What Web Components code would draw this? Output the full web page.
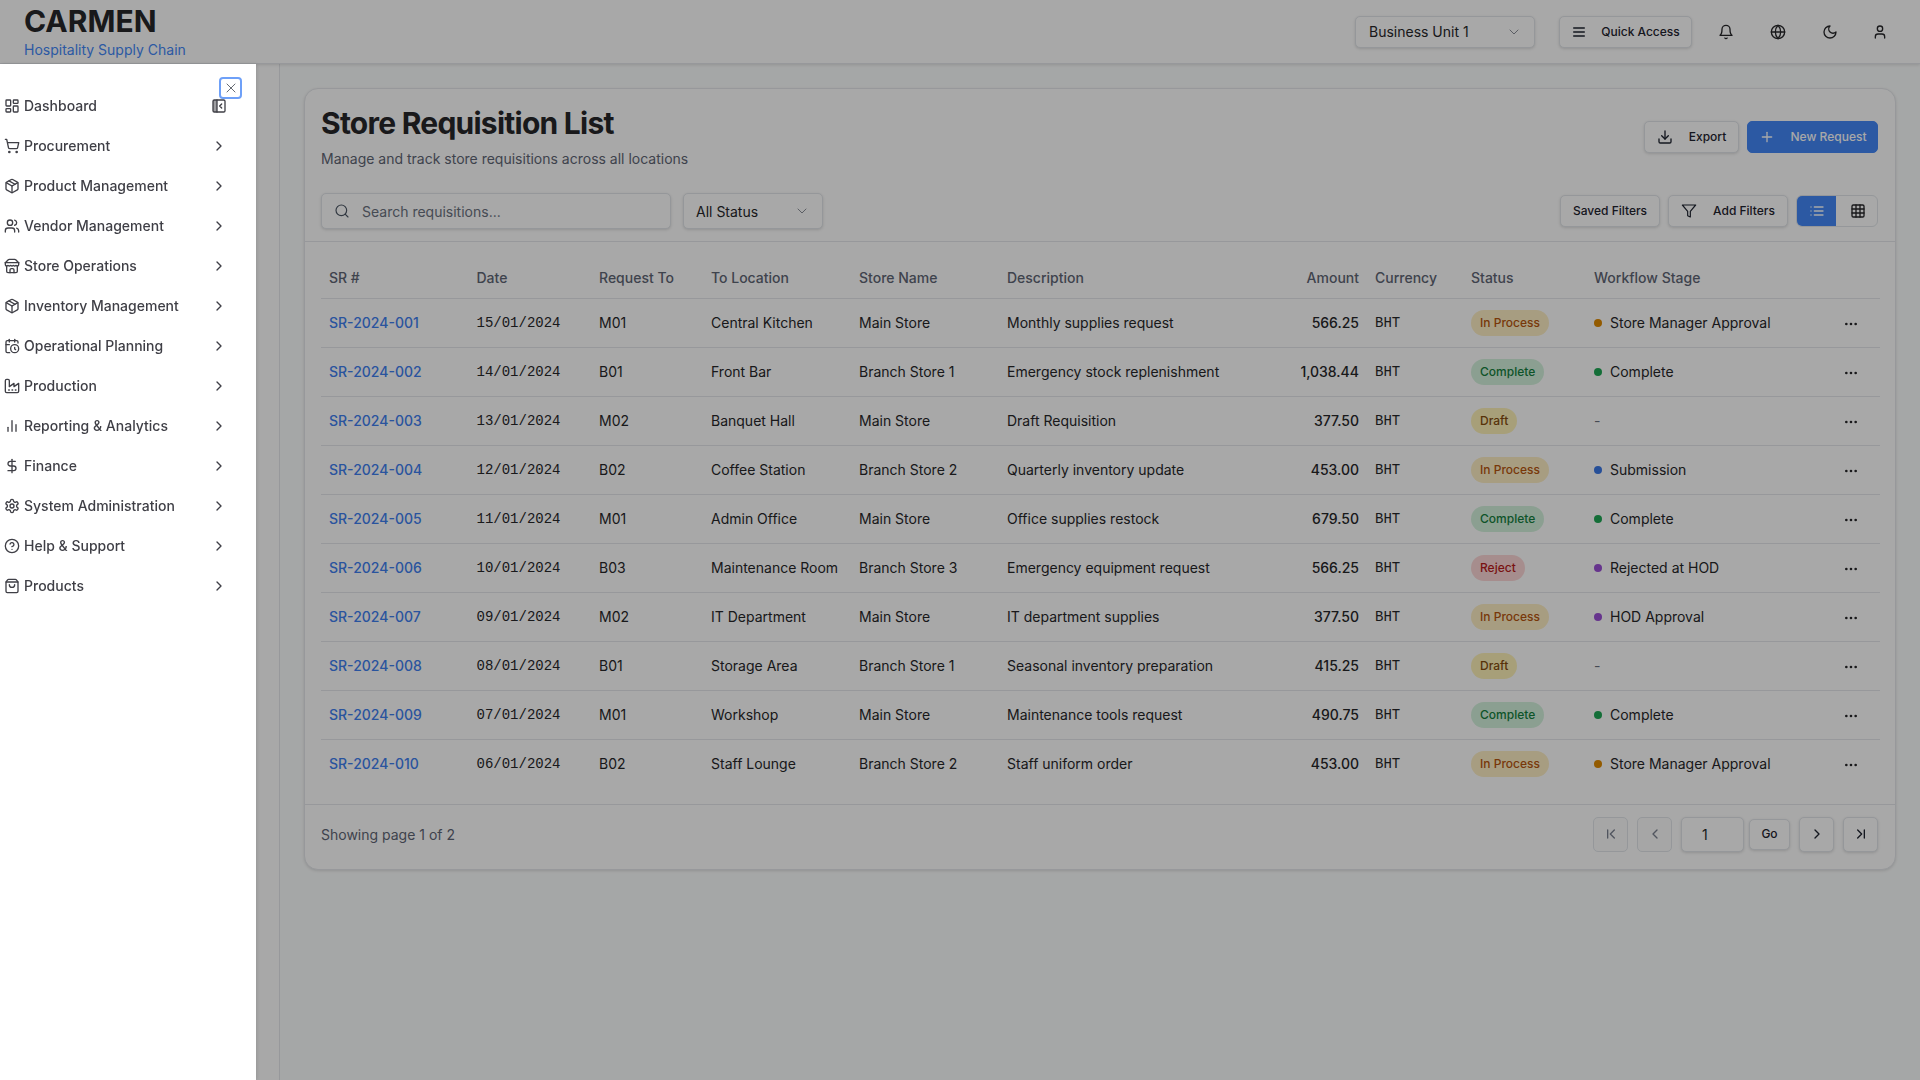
<!DOCTYPE html>
<html><head><meta charset="utf-8"><title>Store Requisition List</title>
<style>
html,body{margin:0;padding:0;height:100%}
body{font-family:Inter,"Noto Sans",sans-serif;font-size:14px;color:#0f172a;background:#fcfdfd;overflow:hidden}
</style></head><body>
<app-root></app-root>
<script>
const P={
dash:'<rect x="3" y="3" width="7" height="9" rx="1"/><rect x="14" y="3" width="7" height="5" rx="1"/><rect x="14" y="12" width="7" height="9" rx="1"/><rect x="3" y="16" width="7" height="5" rx="1"/>',
cart:'<circle cx="8" cy="21" r="1"/><circle cx="19" cy="21" r="1"/><path d="M2.05 2.05h2l2.66 12.42a2 2 0 0 0 2 1.58h9.78a2 2 0 0 0 1.95-1.57l1.65-7.43H5.12"/>',
pkg:'<path d="m7.5 4.27 9 5.15"/><path d="M21 8a2 2 0 0 0-1-1.73l-7-4a2 2 0 0 0-2 0l-7 4A2 2 0 0 0 3 8v8a2 2 0 0 0 1 1.73l7 4a2 2 0 0 0 2 0l7-4A2 2 0 0 0 21 16Z"/><path d="m3.3 7 8.7 5 8.7-5"/><path d="M12 22V12"/>',
users:'<path d="M16 21v-2a4 4 0 0 0-4-4H6a4 4 0 0 0-4 4v2"/><circle cx="9" cy="7" r="4"/><path d="M22 21v-2a4 4 0 0 0-3-3.87"/><path d="M16 3.13a4 4 0 0 1 0 7.75"/>',
store:'<path d="m2 7 4.41-4.41A2 2 0 0 1 7.83 2h8.34a2 2 0 0 1 1.42.59L22 7"/><path d="M4 12v8a2 2 0 0 0 2 2h12a2 2 0 0 0 2-2v-8"/><path d="M15 22v-4a2 2 0 0 0-2-2h-2a2 2 0 0 0-2 2v4"/><path d="M2 7h20"/><path d="M22 7v3a2 2 0 0 1-2 2a2.7 2.7 0 0 1-1.59-.63.7.7 0 0 0-.82 0A2.7 2.7 0 0 1 16 12a2.7 2.7 0 0 1-1.59-.63.7.7 0 0 0-.82 0A2.7 2.7 0 0 1 12 12a2.7 2.7 0 0 1-1.59-.63.7.7 0 0 0-.82 0A2.7 2.7 0 0 1 8 12a2.7 2.7 0 0 1-1.59-.63.7.7 0 0 0-.82 0A2.7 2.7 0 0 1 4 12a2 2 0 0 1-2-2V7"/>',
cal:'<path d="M21 7.5V6a2 2 0 0 0-2-2H5a2 2 0 0 0-2 2v14a2 2 0 0 0 2 2h3.5"/><path d="M16 2v4"/><path d="M8 2v4"/><path d="M3 10h5"/><path d="M17.5 17.5 16 16.3V14"/><circle cx="16" cy="16" r="6"/>',
factory:'<path d="M2 20a2 2 0 0 0 2 2h16a2 2 0 0 0 2-2V8l-7 5V8l-7 5V4a2 2 0 0 0-2-2H4a2 2 0 0 0-2 2Z"/><path d="M17 18h1"/><path d="M12 18h1"/><path d="M7 18h1"/>',
chart:'<path d="M18 20V10"/><path d="M12 20V4"/><path d="M6 20v-6"/>',
dollar:'<line x1="12" x2="12" y1="2" y2="22"/><path d="M17 5H9.5a3.5 3.5 0 0 0 0 7h5a3.5 3.5 0 0 1 0 7H6"/>',
cog:'<path d="M12.22 2h-.44a2 2 0 0 0-2 2v.18a2 2 0 0 1-1 1.73l-.43.25a2 2 0 0 1-2 0l-.15-.08a2 2 0 0 0-2.73.73l-.22.38a2 2 0 0 0 .73 2.73l.15.1a2 2 0 0 1 1 1.72v.51a2 2 0 0 1-1 1.74l-.15.09a2 2 0 0 0-.73 2.73l.22.38a2 2 0 0 0 2.73.73l.15-.08a2 2 0 0 1 2 0l.43.25a2 2 0 0 1 1 1.73V20a2 2 0 0 0 2 2h.44a2 2 0 0 0 2-2v-.18a2 2 0 0 1 1-1.73l.43-.25a2 2 0 0 1 2 0l.15.08a2 2 0 0 0 2.73-.73l.22-.39a2 2 0 0 0-.73-2.73l-.15-.08a2 2 0 0 1-1-1.74v-.5a2 2 0 0 1 1-1.74l.15-.09a2 2 0 0 0 .73-2.73l-.22-.38a2 2 0 0 0-2.73-.73l-.15.08a2 2 0 0 1-2 0l-.43-.25a2 2 0 0 1-1-1.73V4a2 2 0 0 0-2-2z"/><circle cx="12" cy="12" r="3"/>',
help:'<circle cx="12" cy="12" r="10"/><path d="M9.09 9a3 3 0 0 1 5.83 1c0 2-3 3-3 3"/><path d="M12 17h.01"/>',
bag:'<path d="M16 10a4 4 0 0 1-8 0"/><path d="M3.103 6.034h17.794"/><path d="M3.4 5.467a2 2 0 0 0-.4 1.2V20a2 2 0 0 0 2 2h14a2 2 0 0 0 2-2V6.667a2 2 0 0 0-.4-1.2l-2-2.667A2 2 0 0 0 17 2H7a2 2 0 0 0-1.6.8z"/>',
panel:'<rect x="3" y="3" width="6" height="18" fill="currentColor" stroke="none" opacity=".5"/><rect x="3" y="3" width="18" height="18" rx="2"/><path d="M9 3v18"/><path d="m16 15-3-3 3-3"/>',
bell:'<path d="M6 8a6 6 0 0 1 12 0c0 7 3 9 3 9H3s3-2 3-9"/><path d="M10.3 21a1.94 1.94 0 0 0 3.4 0"/>',
globe:'<circle cx="12" cy="12" r="10"/><path d="M12 2a14.5 14.5 0 0 0 0 20 14.5 14.5 0 0 0 0-20"/><path d="M2 12h20"/>',
moon:'<path d="M12 3a6 6 0 0 0 9 9 9 9 0 1 1-9-9Z"/>',
user:'<path d="M19 21v-2a4 4 0 0 0-4-4H9a4 4 0 0 0-4 4v2"/><circle cx="12" cy="7" r="4"/>',
menu:'<path d="M4 6h16"/><path d="M4 12h16"/><path d="M4 18h16"/>',
down:'<path d="M21 15v4a2 2 0 0 1-2 2H5a2 2 0 0 1-2-2v-4"/><path d="m7 10 5 5 5-5"/><path d="M12 15V3"/>',
plus:'<path d="M5 12h14"/><path d="M12 5v14"/>',
funnel:'<path d="M22 3H2l8 9.46V19l4 2v-8.54z"/>',
list:'<path d="M8 6h13"/><path d="M8 12h13"/><path d="M8 18h13"/><path d="M3 6h.01"/><path d="M3 12h.01"/><path d="M3 18h.01"/>',
grid:'<rect x="3" y="3" width="18" height="18" rx="2"/><path d="M3 9h18"/><path d="M3 15h18"/><path d="M9 3v18"/><path d="M15 3v18"/>',
first:'<path d="m17 18-6-6 6-6"/><path d="M7 6v12"/>',
last:'<path d="m7 18 6-6-6-6"/><path d="M17 6v12"/>',
left:'<path d="m15 18-6-6 6-6"/>',
right:'<path d="m9 18 6-6-6-6"/>',
cdown:'<path d="m6 9 6 6 6-6"/>',
dots:'<circle cx="12" cy="12" r="1"/><circle cx="19" cy="12" r="1"/><circle cx="5" cy="12" r="1"/>',
search:'<circle cx="11" cy="11" r="8"/><path d="m21 21-4.3-4.3"/>',
x:'<path d="M18 6 6 18"/><path d="m6 6 12 12"/>'
};
class UiIcon extends HTMLElement{
  connectedCallback(){
    const s=this.getAttribute('size')||16,w=this.getAttribute('sw')||2;
    this.attachShadow({mode:'open'}).innerHTML=`<style>:host{display:inline-flex;flex:none;width:${s}px;height:${s}px}svg{display:block}</style><svg xmlns="http://www.w3.org/2000/svg" width="${s}" height="${s}" viewBox="0 0 24 24" fill="none" stroke="currentColor" stroke-width="${w}" stroke-linecap="round" stroke-linejoin="round">${P[this.getAttribute('name')]}</svg>`;
  }
}
customElements.define('ui-icon',UiIcon);

class UiButton extends HTMLElement{
  connectedCallback(){
    this.attachShadow({mode:'open'}).innerHTML=`<style>
    :host{display:inline-flex;align-items:center;justify-content:center;box-sizing:border-box;height:32px;padding:0 12px;gap:16px;background:#fff;border:1px solid #e2e6ea;border-radius:5px;box-shadow:0 1px 3px rgba(0,0,0,.14);font:500 12px/16px Inter,sans-serif;color:#1f2430;white-space:nowrap}
    :host([primary]){background:#4388f8;border-color:#4388f8;color:#fff;box-shadow:none}
    :host([off]){box-shadow:none;color:#7b8290;background:#fcfcfc}
    </style><slot></slot>`;
  }
}
customElements.define('ui-button',UiButton);

class TopBar extends HTMLElement{
  connectedCallback(){
    this.attachShadow({mode:'open'}).innerHTML=`<style>
    :host{display:flex;align-items:center;box-sizing:border-box;height:64px;padding:0 24px;background:#fff;border-bottom:1px solid #e5e7eb;box-shadow:0 1px 3px rgba(0,0,0,.12);position:relative;z-index:1}
    .brand{display:flex;flex-direction:column}
    .logo{font:700 30px/36px Inter,sans-serif;color:#27272a;margin-top:-1px}
    .tag{font:400 14px/20px Inter,sans-serif;color:#4388f8;margin-top:1px}
    .sp{flex:1}
    .sel{display:flex;align-items:center;justify-content:space-between;box-sizing:border-box;width:180px;height:32px;padding:0 12px 0 13px;margin-right:24px;border:1px solid #e2e6ea;border-radius:5px;box-shadow:0 1px 3px rgba(0,0,0,.14);color:#27272a;background:#fff}
    .sel ui-icon{color:#8b8f98}
    .ib{display:flex;width:52px;justify-content:center;color:#27272a}
    ui-button{gap:14px;width:133px;margin-right:8px}
    </style>
    <div class="brand"><div class="logo">CARMEN</div><div class="tag">Hospitality Supply Chain</div></div>
    <div class="sp"></div>
    <div class="sel"><span>Business Unit 1</span><ui-icon name="cdown" size="16" sw="1.5"></ui-icon></div>
    <ui-button><ui-icon name="menu" size="16"></ui-icon><span>Quick Access</span></ui-button>
    <span class="ib"><ui-icon name="bell" size="16"></ui-icon></span>
    <span class="ib"><ui-icon name="globe" size="16"></ui-icon></span>
    <span class="ib"><ui-icon name="moon" size="16"></ui-icon></span>
    <span class="ib" style="width:48px;margin-right:-8px"><ui-icon name="user" size="16"></ui-icon></span>`;
  }
}
customElements.define('top-bar',TopBar);

class NavItem extends HTMLElement{
  connectedCallback(){
    const ic=this.getAttribute('icon'),t=this.getAttribute('label'),d=this.hasAttribute('plain');
    this.attachShadow({mode:'open'}).innerHTML=`<style>
    :host{display:flex;align-items:center;height:40px;padding:0 29px 0 4px;box-sizing:border-box;color:#3f3f46;font:500 14px/20px Inter,sans-serif}
    span{margin-left:4px;flex:1;white-space:nowrap}
    .ic{color:#3f3f46;margin:0}
    </style><ui-icon class="ic" name="${ic}" size="16" sw="2"></ui-icon><span>${t}</span>${d?'<ui-icon name="panel" size="16" sw="2"></ui-icon>':'<ui-icon name="right" size="16" sw="2"></ui-icon>'}`;
  }
}
customElements.define('nav-item',NavItem);

class SideSheet extends HTMLElement{
  connectedCallback(){
    const items=[['cart','Procurement'],['pkg','Product Management'],['users','Vendor Management'],['store','Store Operations'],['pkg','Inventory Management'],['cal','Operational Planning'],['factory','Production'],['chart','Reporting &amp; Analytics'],['dollar','Finance'],['cog','System Administration'],['help','Help &amp; Support'],['bag','Products']];
    this.attachShadow({mode:'open'}).innerHTML=`<style>
    :host{position:fixed;left:0;top:64px;bottom:0;width:256px;background:#fff;z-index:20;box-shadow:1px 0 4px rgba(0,0,0,.12);padding-top:22px;box-sizing:border-box;display:block}
    .close{position:absolute;left:219px;top:13px;width:23px;height:22px;box-sizing:border-box;border:2px solid #6ea0f8;border-radius:4px;display:flex;align-items:center;justify-content:center;color:#666b73}
    </style>
    <div class="close"><ui-icon name="x" size="16" sw="1.5"></ui-icon></div>
    <nav-item plain icon="dash" label="Dashboard"></nav-item>
    ${items.map(i=>`<nav-item icon="${i[0]}" label="${i[1]}"></nav-item>`).join('')}`;
  }
}
customElements.define('side-sheet',SideSheet);

const ROWS=[
['SR-2024-001','15/01/2024','M01','Central Kitchen','Main Store','Monthly supplies request','566.25','p','Store Manager Approval','#e08a00'],
['SR-2024-002','14/01/2024','B01','Front Bar','Branch Store 1','Emergency stock replenishment','1,038.44','c','Complete','#1fa855'],
['SR-2024-003','13/01/2024','M02','Banquet Hall','Main Store','Draft Requisition','377.50','d','',''],
['SR-2024-004','12/01/2024','B02','Coffee Station','Branch Store 2','Quarterly inventory update','453.00','p','Submission','#3b78e7'],
['SR-2024-005','11/01/2024','M01','Admin Office','Main Store','Office supplies restock','679.50','c','Complete','#1fa855'],
['SR-2024-006','10/01/2024','B03','Maintenance Room','Branch Store 3','Emergency equipment request','566.25','r','Rejected at HOD','#9b4fd6'],
['SR-2024-007','09/01/2024','M02','IT Department','Main Store','IT department supplies','377.50','p','HOD Approval','#9b4fd6'],
['SR-2024-008','08/01/2024','B01','Storage Area','Branch Store 1','Seasonal inventory preparation','415.25','d','',''],
['SR-2024-009','07/01/2024','M01','Workshop','Main Store','Maintenance tools request','490.75','c','Complete','#1fa855'],
['SR-2024-010','06/01/2024','B02','Staff Lounge','Branch Store 2','Staff uniform order','453.00','p','Store Manager Approval','#e08a00']];
const ST={p:'In Process',c:'Complete',d:'Draft',r:'Reject'};

class StatusBadge extends HTMLElement{
  connectedCallback(){
    const k=this.getAttribute('kind');
    this.attachShadow({mode:'open'}).innerHTML=`<style>
    :host{display:inline-flex;align-items:center;height:26px;box-sizing:border-box;padding:0 9px;border-radius:13px;font:500 12px/16px Inter,sans-serif;white-space:nowrap}
    :host([kind=p]){background:#fdeec4;color:#b7560f}
    :host([kind=c]){background:#d4f2dd;color:#15803d}
    :host([kind=d]){background:#fdf2b8;color:#854d0e}
    :host([kind=r]){background:#fcd7d7;color:#b91c1c}
    </style>${ST[k]}`;
  }
}
customElements.define('status-badge',StatusBadge);

class SrTable extends HTMLElement{
  connectedCallback(){
    const cols=[147.5,122.5,112,148,148,291,77,96,123,234,60];
    const body=ROWS.map(r=>`<tr><td><a>${r[0]}</a></td><td class="m">${r[1]}</td><td>${r[2]}</td><td>${r[3]}</td><td>${r[4]}</td><td>${r[5]}</td><td class="n">${r[6]}</td><td class="m">BHT</td><td><status-badge kind="${r[7]}"></status-badge></td><td>${r[8]?`<span class="wf"><i style="background:${r[9]}"></i>${r[8]}</span>`:'<span class="dash">-</span>'}</td><td class="a"><ui-icon name="dots" size="16"></ui-icon></td></tr>`).join('');
    this.attachShadow({mode:'open'}).innerHTML=`<style>
    :host{display:block;padding:16px}
    table{border-collapse:collapse;table-layout:fixed;width:1559px;font:400 14px/20px Inter,sans-serif;color:#27272a}
    th{height:40px;padding:0 8px;text-align:left;font-weight:500;color:#5f6675;border-bottom:1px solid #e5e7eb;box-sizing:border-box}
    td{height:49px;padding:0 8px;box-sizing:border-box;border-bottom:1px solid #e5e7eb;white-space:nowrap}
    tr:last-child td{border-bottom:0}
    a{color:#3f80f0;font-weight:500}
    .m{font:400 14px/20px "Liberation Mono",monospace}
    .n,th.n{text-align:right;font-weight:500}
    .wf{display:inline-flex;align-items:center;gap:8px}
    i{width:8px;height:8px;border-radius:50%;display:block}
    .dash{color:#6b7280}
    .a{text-align:center;color:#27272a;padding:0 0 0 2px}
    .a ui-icon{vertical-align:middle}
    </style><table><colgroup>${cols.map(c=>`<col style="width:${c}px">`).join('')}</colgroup>
    <thead><tr><th>SR #</th><th>Date</th><th>Request To</th><th>To Location</th><th>Store Name</th><th>Description</th><th class="n">Amount</th><th>Currency</th><th>Status</th><th>Workflow Stage</th><th></th></tr></thead>
    <tbody>${body}</tbody></table>`;
  }
}
customElements.define('sr-table',SrTable);

class FilterBar extends HTMLElement{
  connectedCallback(){
    this.attachShadow({mode:'open'}).innerHTML=`<style>
    :host{display:flex;align-items:center;box-sizing:border-box;height:36px;margin:0 17px 0 16px}
    .f{display:flex;align-items:center;box-sizing:border-box;height:36px;background:#fff;border:1px solid #e2e6ea;border-radius:5px;box-shadow:0 1px 3px rgba(0,0,0,.14);color:#27272a}
    .s{width:350px;padding:0 12px;gap:12px;color:#6b7280}
    .s ui-icon{color:#4b5563}
    .st{width:140px;margin-left:12px;padding:0 12px;justify-content:space-between}
    .st ui-icon{color:#8b8f98}
    .sp{flex:1}
    ui-button{margin-right:8px}
    .add{gap:16px;width:120px}
    .sv{width:100px}
    .tg{display:flex;width:82px;height:32px;box-sizing:border-box;border:1px solid #e2e6ea;border-radius:6px;overflow:hidden;color:#27272a}
    .tg span{flex:1;display:flex;align-items:center;justify-content:center}
    .tg span+span{padding-left:2px}
    .tg .on{background:#4388f8;color:#fff}
    </style>
    <div class="f s"><ui-icon name="search" size="16" sw="1.75"></ui-icon><span>Search requisitions...</span></div>
    <div class="f st"><span>All Status</span><ui-icon name="cdown" size="16" sw="1.5"></ui-icon></div>
    <div class="sp"></div>
    <ui-button class="sv">Saved Filters</ui-button>
    <ui-button class="add"><ui-icon name="funnel" size="16" sw="1.75"></ui-icon><span>Add Filters</span></ui-button>
    <div class="tg"><span class="on"><ui-icon name="list" size="16"></ui-icon></span><span><ui-icon name="grid" size="16"></ui-icon></span></div>`;
  }
}
customElements.define('filter-bar',FilterBar);

class PagerBar extends HTMLElement{
  connectedCallback(){
    this.attachShadow({mode:'open'}).innerHTML=`<style>
    :host{display:flex;align-items:center;box-sizing:border-box;height:65px;padding:0 17px 6px 16px;border-top:1px solid #e5e7eb;color:#5f6675}
    .sp{flex:1}
    ui-button{width:35px;height:35px;padding:0;margin-left:9px}
    .inp{width:63px;height:35px;box-sizing:border-box;margin-left:9px;border:1px solid #e2e6ea;border-radius:5px;box-shadow:0 1px 3px rgba(0,0,0,.14);background:#fff;color:#27272a;padding-left:20px;line-height:33px;font-size:14px}
    .go{width:41px;height:31px;margin-left:5px}
    .n2{margin-left:9px}
    </style><span>Showing page 1 of 2</span><div class="sp"></div>
    <ui-button off><ui-icon name="first" size="16"></ui-icon></ui-button>
    <ui-button off><ui-icon name="left" size="16"></ui-icon></ui-button>
    <div class="inp">1</div>
    <ui-button class="go">Go</ui-button>
    <ui-button class="n2"><ui-icon name="right" size="16"></ui-icon></ui-button>
    <ui-button><ui-icon name="last" size="16"></ui-icon></ui-button>`;
  }
}
customElements.define('pager-bar',PagerBar);

class ListCard extends HTMLElement{
  connectedCallback(){
    this.attachShadow({mode:'open'}).innerHTML=`<style>
    :host{display:block;background:#fff;border:1px solid #e5e7eb;border-radius:14px;box-shadow:0 1px 3px rgba(0,0,0,.12)}
    .top{display:flex;justify-content:space-between;box-sizing:border-box;padding:16px 17px 0 16px;height:104px}
    h1{margin:0;font:700 30px/36px Inter,sans-serif;letter-spacing:-.75px;color:#27272a}
    p{margin:8px 0 0;font:400 14px/20px Inter,sans-serif;color:#5f6675}
    .acts{display:flex;gap:8px;padding-top:16px;align-items:flex-start}
    .ex{width:95px}.nw{width:131px}
    .band{border-bottom:1px solid #e5e7eb;padding:0 0 12px}
    </style>
    <div class="band"><div class="top"><div><h1>Store Requisition List</h1><p>Manage and track store requisitions across all locations</p></div>
    <div class="acts"><ui-button class="ex"><ui-icon name="down" size="16"></ui-icon><span>Export</span></ui-button><ui-button class="nw" primary><ui-icon name="plus" size="16"></ui-icon><span>New Request</span></ui-button></div></div>
    <filter-bar></filter-bar></div>
    <sr-table></sr-table><pager-bar></pager-bar>`;
  }
}
customElements.define('list-card',ListCard);

class AppRoot extends HTMLElement{
  connectedCallback(){
    this.attachShadow({mode:'open'}).innerHTML=`<style>
    :host{display:flex;flex-direction:column;height:1080px;width:1920px;background:#fbfdfd}
    .body{flex:1;display:flex;min-height:0}
    .rail{width:280px;box-sizing:border-box;flex:none;background:#fff;border-right:1px solid #e5e7eb}
    main{flex:1;min-width:0;padding:24px 24px 0 24px}
    .dim{position:fixed;inset:0;background:rgba(0,0,0,.34);z-index:10}
    </style>
    <top-bar></top-bar>
    <div class="body"><div class="rail"></div><main><list-card></list-card></main></div>
    <div class="dim"></div>
    <side-sheet></side-sheet>`;
  }
}
customElements.define('app-root',AppRoot);
</script>
</body></html>
